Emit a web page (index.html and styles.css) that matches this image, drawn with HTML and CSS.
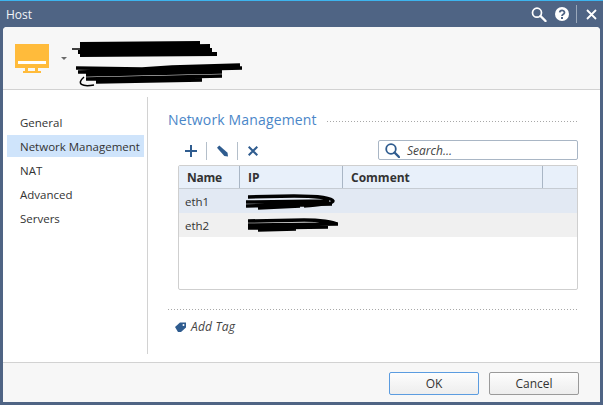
FILE: index.html
```html
<!DOCTYPE html>
<html lang="en">
<head>
<meta charset="utf-8">
<title>Host</title>
<link rel="stylesheet" href="styles.css">
</head>
<body>
<div class="window">
  <div class="titlebar">
    <span class="title">Host</span>
    <div class="title-tools">
      <svg class="t-search" width="16" height="15" viewBox="0 0 16 15"><circle cx="6" cy="5.700" r="4.500" fill="none" stroke="#fff" stroke-width="1.700"/><path d="M9.500 9l5 5" stroke="#fff" stroke-width="2.400" stroke-linecap="round"/></svg>
      <svg class="t-help" width="14" height="14" viewBox="0 0 14 14"><circle cx="7" cy="7" r="7" fill="#fff"/><path d="M4.700 5.400a2.400 2.100 0 1 1 3.600 1.900C7.400 7.900 7 8.200 7 9" fill="none" stroke="#4f6484" stroke-width="1.800"/><rect x="6" y="10" width="2" height="2" fill="#4f6484"/></svg>
      <span class="t-sep"></span>
      <svg class="t-close" width="11" height="11" viewBox="0 0 11 11"><path d="M1 1l9 9M10 1l-9 9" stroke="#fff" stroke-width="1.800"/></svg>
    </div>
  </div>
  <div class="dialog">
    <div class="header">
      <svg class="monitor" width="34" height="29" viewBox="0 0 34 29"><rect width="34" height="24" fill="#ffbb3b"/><rect x="3" y="17" width="28" height="3" fill="#fff"/><rect x="10" y="24" width="3" height="3" fill="#ffbb3b"/><rect x="20" y="24" width="3" height="3" fill="#ffbb3b"/><rect x="8" y="27" width="18" height="2" fill="#ffbb3b"/></svg>
      <svg class="caret" width="6" height="3" viewBox="0 0 6 3"><path d="M0 0h6L3 3z" fill="#6a6a6a"/></svg>
      <svg class="scribble-head" width="172" height="46" viewBox="0 0 172 46"><path d="M8 3L128 2M8 7L138 5M6 11L140 9M8 14L145 13" stroke="#000" stroke-width="4" fill="none"/><path d="M0 8h18" stroke="#000" stroke-width="1.500"/><path d="M4 27L70 28L100 26L168 24M6 31L170 27M14 34L150 31M14 38L150 35M24 41L130 39" stroke="#000" stroke-width="3.500" fill="none"/><path d="M12 36C4 43 10 46 22 44" stroke="#000" stroke-width="1.500" fill="none"/></svg>
    </div>
    <div class="main">
      <nav class="sidebar">
        <div class="nav-item">General</div>
        <div class="nav-item active">Network Management</div>
        <div class="nav-item">NAT</div>
        <div class="nav-item">Advanced</div>
        <div class="nav-item">Servers</div>
      </nav>
      <section class="content">
        <div class="section-head">
          <h2>Network Management</h2>
          <span class="dots"></span>
        </div>
        <div class="toolbar">
          <div class="tools">
            <svg class="tool" width="12" height="12" viewBox="0 0 12 12"><path d="M6 0v12M0 6h12" stroke="#2f5c8f" stroke-width="2"/></svg>
            <span class="tool-sep"></span>
            <svg class="tool" width="11" height="12" viewBox="0 0 12 12"><path d="M0 2.500L2.500 0l9 8 .5 4-4-.5z" fill="#2f5c8f"/></svg>
            <span class="tool-sep"></span>
            <svg class="tool" width="10" height="10" viewBox="0 0 10 10"><path d="M.7.7l8.600 8.600M9.300.7L.7 9.300" stroke="#2f5c8f" stroke-width="2"/></svg>
          </div>
          <div class="search">
            <svg width="15" height="15" viewBox="0 0 15 15"><circle cx="6" cy="6" r="4.800" fill="none" stroke="#2f5c8f" stroke-width="1.800"/><path d="M9.500 9.500l4.500 4.500" stroke="#2f5c8f" stroke-width="2.400" stroke-linecap="round"/></svg>
            <span>Search...</span>
          </div>
        </div>
        <div class="table">
          <div class="row head">
            <div class="c1">Name</div><div class="c2">IP</div><div class="c3">Comment</div><div class="c4"></div>
          </div>
          <div class="row r1">
            <div class="c1">eth1</div>
            <div class="c2 ip"><svg width="92" height="18" viewBox="0 0 92 18"><path d="M4 4L50 3C70 3 88 5 89 8C89 11 70 12 60 13M2 9L85 8M2 13L88 11M14 15L56 13" stroke="#000" stroke-width="3.500" fill="none"/></svg></div>
          </div>
          <div class="row r2">
            <div class="c1">eth2</div>
            <div class="c2 ip"><svg width="96" height="16" viewBox="0 0 96 16"><path d="M4 4L60 3C76 3 90 5 92 7M4 8L94 7M4 11L84 10M14 13L52 12" stroke="#000" stroke-width="3.500" fill="none"/></svg></div>
          </div>
        </div>
        <div class="tag-row">
          <svg width="11" height="10" viewBox="0 0 11 10"><path d="M0 5L5 .5h6v5L6 10H3z" fill="#2f5c8f"/><circle cx="8.500" cy="3" r="1" fill="#fff"/></svg>
          <span>Add Tag</span>
        </div>
      </section>
    </div>
    <div class="footer">
      <button class="btn primary">OK</button>
      <button class="btn">Cancel</button>
    </div>
  </div>
</div>
</body>
</html>
```
FILE: styles.css
```css
html, body { margin: 0; padding: 0; }
body {
  width: 603px;
  height: 405px;
  overflow: hidden;
  font-family: "Open Sans", "Noto Sans", sans-serif;
  font-size: 12px;
  color: #333;
}
.window {
  height: 405px;
  box-sizing: border-box;
  background: #4f6484;
  border-top: 1px solid #3db4ee;
  padding: 0 3px 3px 3px;
  display: flex;
  flex-direction: column;
}
.titlebar {
  height: 26px;
  flex: none;
  display: flex;
  align-items: center;
  justify-content: space-between;
  color: #fff;
  padding-left: 3px;
}
.title { font-size: 12px; color: #f2f5f8; }
.title-tools { display: flex; align-items: center; padding-right: 3px; }
.t-search, .t-help, .t-close { display: block; }
.t-help { margin-left: 8px; }
.t-sep { width: 1px; height: 18px; background: #9aa8bb; margin: 0 9px 0 7px; }
.dialog {
  flex: 1;
  display: flex;
  flex-direction: column;
  background: #fff;
  border-radius: 4px 4px 0 0;
  min-height: 0;
}
.header {
  height: 62px;
  flex: none;
  background: #f7f7f7;
  border-bottom: 1px solid #d2d2d2;
  border-radius: 4px 4px 0 0;
  display: flex;
  align-items: flex-start;
  position: relative;
}
.monitor { margin: 17px 0 0 12px; }
.caret { margin: 30px 0 0 12px; }
.scribble-head { position: absolute; left: 69px; top: 14px; }
.main { flex: 1; display: flex; min-height: 0; padding: 7px 0 8px; }
.sidebar {
  flex: none;
  width: 137px;
  border-right: 1px solid #d2d2d2;
  padding: 14px 3px 0 4px;
}
.nav-item {
  height: 22px;
  line-height: 24px;
  margin-bottom: 2px;
  padding-left: 13px;
  font-size: 11.5px;
  white-space: nowrap;
  color: #333;
}
.nav-item.active { background: #cfe4fb; }
.content { flex: 1; padding: 0 22px 0 20px; min-width: 0; }
.section-head { display: flex; align-items: center; height: 30px; margin-top: 6px; }
.section-head h2 {
  margin: 0;
  padding-top: 2px;
  font-size: 14px;
  letter-spacing: .15px;
  font-weight: 400;
  color: #4a86c8;
  white-space: nowrap;
}
.dots {
  flex: 1;
  height: 1px;
  margin: 6px 0 0 10px;
  background: repeating-linear-gradient(90deg, #a8a8a8 0 1px, transparent 1px 3px);
}
.toolbar { display: flex; justify-content: space-between; align-items: center; height: 20px; margin-top: 7px; }
.tools { display: flex; align-items: center; padding: 1px 0 0 17px; }
.tool { display: block; }
.tool-sep { width: 1px; height: 18px; background: #b4bfca; margin: 0 10px 0 9px; }
.search {
  width: 200px;
  height: 20px;
  box-sizing: border-box;
  border: 1px solid #a9b6c5;
  border-radius: 2px;
  display: flex;
  align-items: center;
  padding-left: 6px;
  font-style: italic;
  font-size: 12px;
  color: #444;
  gap: 7px;
}
.table {
  margin: 5px 0 0 10px;
  height: 125px;
  box-sizing: border-box;
  border: 1px solid #cfcfcf;
  border-radius: 2px;
  font-size: 11.5px;
}
.row { display: flex; height: 24px; align-items: center; }
.c1 { width: 61px; padding-left: 6px; box-sizing: border-box; }
.c2 { width: 103px; padding-left: 8px; box-sizing: border-box; }
.c3 { width: 200px; padding-left: 8px; box-sizing: border-box; }
.c4 { flex: 1; }
.row.head {
  height: 22px;
  background: #e8f0fa;
  border-bottom: 1px solid #c6ccd3;
  font-weight: 700;
  font-size: 12px;
  color: #333;
}
.row.head > div { height: 22px; line-height: 23px; border-right: 1px solid #a9b6c5; }
.row.head > .c1 { padding-left: 8px; letter-spacing: -.3px; }
.row.head > .c4 { border-right: 0; }
.r1 { background: #e2e9f3; }
.r2 { background: #f0f0f0; }
.ip { position: relative; align-self: stretch; }
.ip svg { position: absolute; left: 4px; top: 4px; }
.tag-row {
  margin-top: 19px;
  padding: 9px 0 0 7px;
  background: repeating-linear-gradient(90deg, #a8a8a8 0 1px, transparent 1px 3px) top left / 100% 1px no-repeat;
  display: flex;
  align-items: center;
  gap: 5px;
  font-style: italic;
  font-size: 12px;
  letter-spacing: .2px;
  color: #444;
}
.footer {
  height: 40px;
  flex: none;
  background: #f7f7f7;
  border-top: 1px solid #d2d2d2;
  display: flex;
  justify-content: flex-end;
  align-items: flex-start;
  gap: 10px;
  padding: 9px 21px 0 0;
  box-sizing: border-box;
}
.btn {
  width: 90px;
  height: 23px;
  padding: 0;
  font: 12px "Open Sans", "Noto Sans", sans-serif;
  color: #333;
  background: linear-gradient(#fdfdfd, #ededed);
  border: 1px solid #9a9a9a;
  border-radius: 2px;
}
.btn.primary { border-color: #5b9ce0; }
```
